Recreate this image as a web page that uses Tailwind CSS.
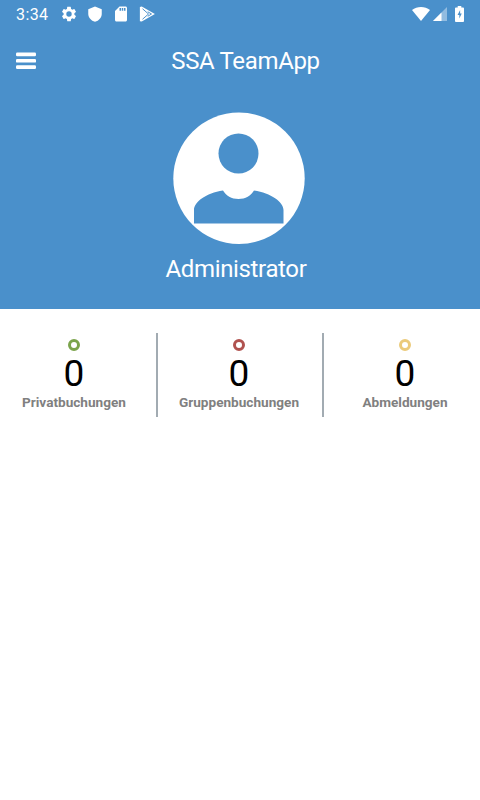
<!DOCTYPE html>
<html lang="de">
<head>
    <meta charset="UTF-8">
    <meta name="viewport" content="width=device-width, initial-scale=1.0">
    <title>SSA TeamApp</title>
    <!-- Tailwind CSS CDN -->
    <script src="https://cdn.jsdelivr.net/npm/@tailwindcss/browser@4"></script>
</head>
<body class="min-h-screen bg-white font-[Roboto,sans-serif]">
    <header class="h-[308.5px] bg-[#4a90cb] text-white">
        <!-- Status bar -->
        <div class="flex h-7 items-center pl-4 pr-4">
            <span class="w-11 pt-px text-[16px] leading-7 tracking-[0.4px]">3:34</span>
            <svg class="h-[18px] w-[18px]" viewBox="0 0 24 24" fill="currentColor"><path d="M19.14 12.94c.04-.3.06-.61.06-.94 0-.32-.02-.64-.07-.94l2.03-1.58a.49.49 0 0 0 .12-.61l-1.92-3.32a.49.49 0 0 0-.59-.22l-2.39.96c-.5-.38-1.03-.7-1.62-.94l-.36-2.54a.48.48 0 0 0-.48-.41h-3.84c-.24 0-.43.17-.47.41l-.36 2.54c-.59.24-1.13.57-1.62.94l-2.39-.96a.48.48 0 0 0-.59.22L2.74 8.87c-.12.21-.08.47.12.61l2.03 1.58c-.05.3-.09.63-.09.94s.02.64.07.94l-2.03 1.58a.49.49 0 0 0-.12.61l1.92 3.32c.12.22.37.29.59.22l2.39-.96c.5.38 1.03.7 1.62.94l.36 2.54c.05.24.24.41.48.41h3.84c.24 0 .44-.17.47-.41l.36-2.54c.59-.24 1.13-.56 1.62-.94l2.39.96c.22.08.47 0 .59-.22l1.92-3.32a.48.48 0 0 0-.12-.61zM12 15.6a3.6 3.6 0 1 1 0-7.2 3.6 3.6 0 0 1 0 7.2z"/></svg>
            <svg class="ml-2 h-[18px] w-[18px]" viewBox="0 0 24 24" fill="currentColor"><path d="M12 2 3 5.500v6c0 5 3.800 9.500 9 10.700 5.200-1.200 9-5.700 9-10.700v-6z"/></svg>
            <svg class="ml-2 h-[18px] w-[18px]" viewBox="0 0 24 24" fill="currentColor"><path d="M18 2h-8L4 8v12c0 1.100.9 2 2 2h12c1.100 0 2-.9 2-2V4c0-1.100-.9-2-2-2zm-6 5.500h-2V4h2zm3 0h-2V4h2zm3 0h-2V4h2z"/></svg>
            <svg class="ml-2 h-[18px] w-[18px]" viewBox="0 0 24 24"><path fill="#fff" d="M2.500 2.500 5 2l17.500 10L5 22l-2.500-.5z"/><path fill="none" stroke="#4a90cb" stroke-width="1.300" d="m6 5 8 7-8 7M13 9l5 3-5 3"/></svg>
            <svg class="ml-auto h-[14px] w-[18px]" viewBox="0 0 18 14" fill="currentColor"><path d="M0 3C5-.9 13-.9 18 3L9 14z"/></svg>
            <svg class="ml-[3px] h-[14px] w-[14px]" viewBox="0 0 14 14" fill="currentColor"><path fill-opacity=".4" d="M14 0v14H0z"/><path d="M8.500 5.500V14H0z"/></svg>
            <svg class="ml-2 h-4 w-[9px]" viewBox="0 0 10 16" preserveAspectRatio="none"><path fill="#fff" d="M3 0h4v1.500h2a1 1 0 0 1 1 1V15a1 1 0 0 1-1 1H1a1 1 0 0 1-1-1V2.500a1 1 0 0 1 1-1h2z"/><path fill="#4a90cb" d="M5.700 4 2.800 9h2v3.500L7.500 7.500H5.700z"/></svg>
        </div>

        <!-- Title bar -->
        <div class="grid h-[66px] grid-cols-[1fr_auto_1fr] items-center px-4">
            <svg class="h-[18px] w-5" viewBox="0 0 20 18" fill="currentColor"><rect y="0.500" width="20" height="3.700" rx="1.200"/><rect y="6.900" width="20" height="3.700" rx="1.200"/><rect y="13.200" width="20" height="3.700" rx="1.200"/></svg>
            <h1 class="pl-[11px] text-[24px] leading-8 tracking-[-0.35px]">SSA TeamApp</h1>
        </div>

        <!-- Profile -->
        <div class="flex flex-col items-center pr-[3px] pt-[18px]">
            <svg class="h-[132px] w-[132px]" viewBox="0 0 132 132">
                <circle cx="66" cy="66.300" r="65.700" fill="#fff"/>
                <g fill="#4a90cb">
                    <circle cx="65.500" cy="41.500" r="20"/>
                    <path d="M21 111.500V98c0-8 12-17 29-19.500 3 5 8.500 8.500 15.500 8.500s12.500-3.500 15.500-8.500c17 2.500 29.500 11.500 29.500 19.500v13.500z"/>
                </g>
            </svg>
            <p class="mt-[9px] pr-[5px] text-[24px] leading-8 tracking-[-0.35px]">Administrator</p>
        </div>
    </header>

    <!-- Booking counters -->
    <main class="mt-[24.5px] grid h-[84px] grid-cols-[158px_166px_156px] text-center">
        <section class="flex flex-col items-center border-r-2 border-[#a2abb2] pr-2 pt-[6px]">
            <span class="h-3 w-3 rounded-full border-[3px] border-[#7ba44c]"></span>
            <span class="mt-[5px] text-[37px] leading-9 text-black">0</span>
            <span class="mt-[2px] text-[13.6px] leading-4 font-bold text-[#808080]">Privatbuchungen</span>
        </section>
        <section class="flex flex-col items-center border-r-2 border-[#a2abb2] pr-[2px] pt-[6px]">
            <span class="h-3 w-3 rounded-full border-[3px] border-[#b0524f]"></span>
            <span class="mt-[5px] text-[37px] leading-9 text-black">0</span>
            <span class="mt-[2px] text-[13.6px] leading-4 font-bold text-[#808080]">Gruppenbuchungen</span>
        </section>
        <section class="flex flex-col items-center pl-[6px] pt-[6px]">
            <span class="h-3 w-3 rounded-full border-[3px] border-[#ebca7a]"></span>
            <span class="mt-[5px] text-[37px] leading-9 text-black">0</span>
            <span class="mt-[2px] text-[13.6px] leading-4 font-bold text-[#808080]">Abmeldungen</span>
        </section>
    </main>
</body>
</html>
